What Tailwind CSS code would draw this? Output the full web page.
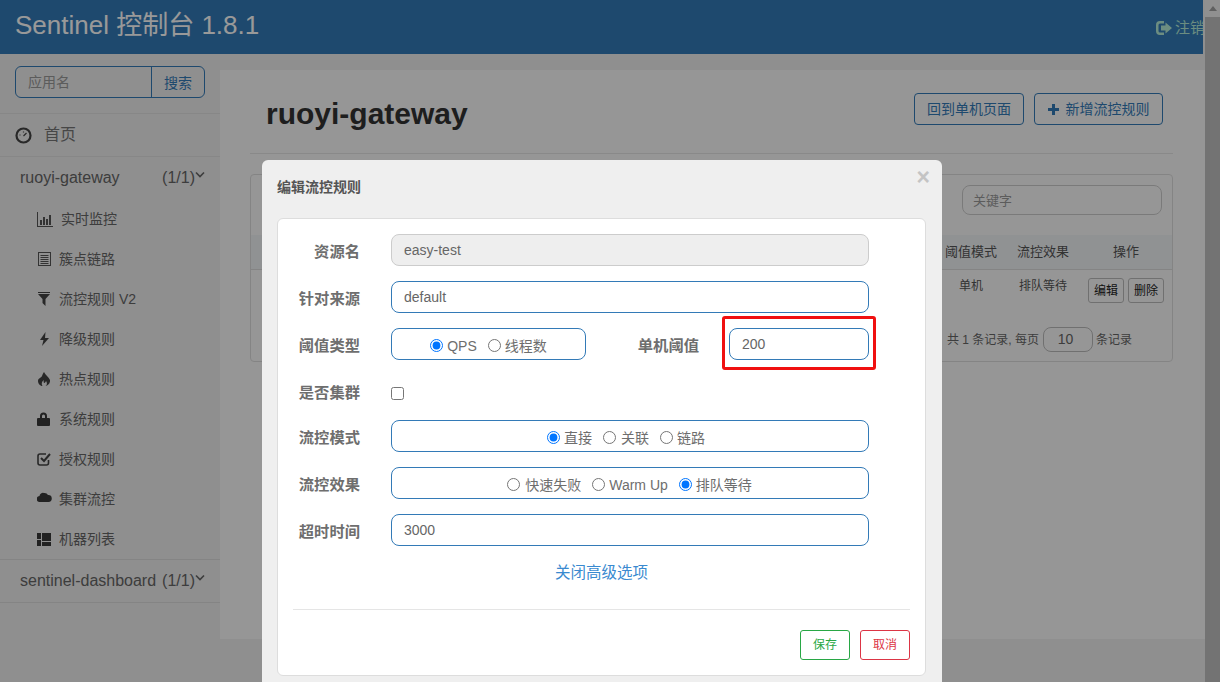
<!DOCTYPE html>
<html lang="zh"><head><meta charset="utf-8"><title>Sentinel</title>
<script src="https://cdn.jsdelivr.net/npm/@tailwindcss/browser@4"></script></head>
<body class="overflow-hidden">
<div class="relative flex w-[1220px] h-[682px] overflow-hidden font-['Liberation_Sans','Noto_Sans_CJK_SC',sans-serif] text-[14px] text-[#555]">
  <div class="w-[1205px] h-full flex flex-col bg-[#eee]">
    <header class="w-[1203px] h-[54px] shrink-0 bg-[#337ab7] flex items-center justify-between overflow-hidden pl-[15px]">
      <span class="text-[26px] leading-[50px] -mt-[4px] text-white whitespace-nowrap">Sentinel 控制台 1.8.1</span>
      <span class="flex items-center gap-[3px] text-[15px] text-[#b5ecd8] whitespace-nowrap w-[47px] overflow-hidden pt-[2px]">
        <svg class="w-[16px] h-[16px] shrink-0" viewBox="0 0 16 16" fill="currentColor"><path d="M0 5a4 4 0 0 1 4-4h4v2.500H4A1.500 1.500 0 0 0 2.500 5v6A1.500 1.500 0 0 0 4 12.500h4V15H4a4 4 0 0 1-4-4z"/><path d="M9.500 2.500L16 8l-6.500 5.500V10.500H5v-5h4.500z"/></svg>
        <span class="shrink-0">注销</span>
      </span>
    </header>
    <div class="flex flex-1 min-h-0">
      <aside class="w-[220px] shrink-0">
        <div class="pt-[12px] px-[15px] pb-[15px]">
          <div class="flex h-[32px] border border-[#337ab7] rounded-[6px] bg-[#eee] overflow-hidden">
            <input class="w-[135px] px-[12px] bg-transparent outline-none text-[14px] placeholder:text-[#999]" placeholder="应用名">
            <div class="flex-1 border-l border-[#337ab7] flex items-center justify-center text-[14px] pt-[2px] text-[#337ab7]">搜索</div>
          </div>
        </div>
        <div class="h-[44px] border-y border-[#e2e2e2] flex items-center pl-[15px] text-[16px] text-[#777]">
          <svg class="w-[17px] h-[17px] text-[#444]" viewBox="0 0 17 17" fill="none" stroke="currentColor" stroke-width="2.200"><circle cx="8.500" cy="8.500" r="7"/><path d="M8.500 9L11.500 6M4.500 8h1M8.500 4.500v1" stroke-width="1.200"/></svg>
          <span class="ml-[12px]">首页</span>
        </div>
        <div class="h-[42px] flex items-center pl-[20px] pr-[15px] text-[16px] text-[#666] justify-between">
          <span>ruoyi-gateway</span>
          <span class="flex items-center">(1/1)<svg class="w-[10px] h-[8px] -mt-[6px]" viewBox="0 0 10 8" fill="none" stroke="currentColor" stroke-width="1.600"><path d="M1 1.500l4 4 4-4"/></svg></span>
        </div>
        <ul class="text-[14px] text-[#666]">
          <li class="h-[40px] flex items-center pl-[37px]"><svg class="w-[16px] h-[15px] text-[#555] mr-[8px]" viewBox="0 0 16 15" fill="currentColor"><path d="M0 0h1v14h15v1H0z"/><path d="M3 8h2v5H3zM6 5h2v8H6zM9 7h2v6H9zM12 3h2v10h-2z"/></svg><span>实时监控</span></li>
          <li class="h-[40px] flex items-center pl-[38px]"><svg class="w-[13px] h-[14px] text-[#555] mr-[8px]" viewBox="0 0 13 14" fill="none" stroke="currentColor"><rect x=".5" y=".5" width="12" height="13"/><path d="M2.500 3.500h8M2.500 5.500h8M2.500 7.500h8M2.500 9.500h8M2.500 11.500h8"/></svg><span>簇点链路</span></li>
          <li class="h-[40px] flex items-center pl-[38px]"><svg class="w-[12px] h-[14px] text-[#444] mr-[9px]" viewBox="0 0 12 14" fill="currentColor"><path d="M0 0h12v1H0zM0 2h12L7.500 7v7L4.500 11V7z"/></svg><span>流控规则 V2</span></li>
          <li class="h-[40px] flex items-center pl-[40px]"><svg class="w-[9px] h-[14px] text-[#444] mr-[10px]" viewBox="0 0 9 14" fill="currentColor"><path d="M5.500 0L0 8h3.500L2 14l7-8H5z"/></svg><span>降级规则</span></li>
          <li class="h-[40px] flex items-center pl-[38px]"><svg class="w-[12px] h-[14px] text-[#444] mr-[9px]" viewBox="0 0 12 14" fill="currentColor"><path d="M6 0c1 3 5 5 6 8 .5 3-2 6-4.500 6 1.500-1 2-3 .5-5-.5 1.500-1.500 2-2 2-.5-1-.5-2 0-3-2 1-3 4-1.500 6C2 14 0 11.500 0 9c0-3 3-3 4-5 .5-1 1-3 2-4z"/></svg><span>热点规则</span></li>
          <li class="h-[40px] flex items-center pl-[37px]"><svg class="w-[13px] h-[14px] text-[#3a3a3a] mr-[9px]" viewBox="0 0 13 14" fill="currentColor"><path d="M3 6V4a3.500 3.500 0 0 1 7 0v2h2a1 1 0 0 1 1 1v6a1 1 0 0 1-1 1H1a1 1 0 0 1-1-1V7a1 1 0 0 1 1-1zm2 0h3V4a1.500 1.500 0 0 0-3 0z"/></svg><span>系统规则</span></li>
          <li class="h-[40px] flex items-center pl-[37px]"><svg class="w-[14px] h-[14px] text-[#444] mr-[8px]" viewBox="0 0 14 14" fill="none" stroke="currentColor" stroke-width="1.600"><path d="M11.500 8v3a2 2 0 0 1-2 2H3a2 2 0 0 1-2-2V4a2 2 0 0 1 2-2h6"/><path d="M4 6l3 3 6-7" stroke-width="2"/></svg><span>授权规则</span></li>
          <li class="h-[40px] flex items-center pl-[37px]"><svg class="w-[15px] h-[10px] text-[#3a3a3a] mr-[7px] -mt-[4px]" viewBox="0 0 15 10" fill="currentColor"><path d="M3 10a3 3 0 0 1-.5-6A3.500 3.500 0 0 1 7 1a4 4 0 0 1 4 2 3.500 3.500 0 0 1 .5 7z"/></svg><span>集群流控</span></li>
          <li class="h-[40px] flex items-center pl-[37px]"><svg class="w-[14px] h-[13px] text-[#3a3a3a] mr-[8px]" viewBox="0 0 14 13" fill="currentColor"><path d="M0 0h4v6H0zM0 7h4v6H0zM5 0h9v8H5zM5 9h9v4H5z" /></svg><span>机器列表</span></li>
        </ul>
        <div class="h-[44px] border-y border-[#dcdcdc] flex items-center justify-between pl-[20px] pr-[15px] text-[16px] text-[#666]">
          <span class="whitespace-nowrap">sentinel-dashboard</span>
          <span class="flex items-center">(1/1)<svg class="w-[10px] h-[8px] -mt-[6px]" viewBox="0 0 10 8" fill="none" stroke="currentColor" stroke-width="1.600"><path d="M1 1.500l4 4 4-4"/></svg></span>
        </div>
      </aside>
      <main class="flex-1 mt-[16px] h-[569px] bg-[#fbfbfb] pl-[30px] pr-[32px]">
        <div class="h-[84px] pt-[23px] flex justify-between border-b border-[#e5e5e5]">
          <h1 class="pl-[16px] text-[30px] leading-[42px] font-bold text-[#333]">ruoyi-gateway</h1>
          <div class="flex gap-[10px] pr-[10px] h-[32px] text-[14px] text-[#337ab7]">
            <div class="w-[110px] border border-[#337ab7] rounded-[4px] flex items-center justify-center">回到单机页面</div>
            <div class="w-[129px] border border-[#337ab7] rounded-[4px] flex items-center justify-center gap-[7px]"><svg class="w-[11px] h-[11px]" viewBox="0 0 11 11" fill="currentColor"><path d="M4 0h3v4h4v3H7v4H4V7H0V4h4z"/></svg>新增流控规则</div>
          </div>
        </div>
        <section class="mt-[20px] h-[188px] border border-[#ddd] rounded-[4px] overflow-hidden">
          <div class="h-[60px] flex justify-end pt-[10px] pr-[10px]">
            <input class="w-[200px] h-[30px] px-[10px] border border-[#ccc] rounded-[8px] bg-transparent text-[13px] outline-none placeholder:text-[#999]" placeholder="关键字">
          </div>
          <div class="h-[35px] bg-[#f1f3f5] border-b border-[#ddd] flex justify-end items-center text-[13px] text-[#555] text-center">
            <span class="w-[72px]">阈值模式</span><span class="w-[72px]">流控效果</span><span class="w-[93px] pl-[1px]">操作</span>
          </div>
          <div class="h-[40px] flex justify-end text-[12px] text-[#555] text-center">
            <span class="w-[72px] pt-[7px]">单机</span><span class="w-[72px] pt-[7px]">排队等待</span>
            <span class="w-[93px] pt-[8px] pl-[9px] flex gap-[4px]">
              <span class="w-[36px] h-[25px] border border-[#bbb] rounded-[3px] flex items-center justify-center text-[#222]">编辑</span>
              <span class="w-[36px] h-[25px] border border-[#bbb] rounded-[3px] flex items-center justify-center text-[#222]">删除</span>
            </span>
          </div>
          <div class="flex justify-end items-center pt-[17px] pr-[40px] text-[12px] text-[#666] whitespace-nowrap">
            <span>共 1 条记录, 每页</span>
            <span class="ml-[4px] mr-[3px] w-[50px] h-[25px] border border-[#bbb] rounded-[8px] flex items-center justify-center text-[14px] pr-[5px]">10</span>
            <span>条记录</span>
          </div>
        </section>
      </main>
    </div>
  </div>
  <div class="w-[15px] h-full flex flex-col bg-[#c0c0c0]">
    <div class="h-[17px] flex items-center justify-center bg-[#f0f0f0]"><svg class="w-[8px] h-[5px]" viewBox="0 0 8 5" fill="#a0a0a0"><path d="M4 0l4 5H0z"/></svg></div>
    <div class="flex-1"></div>
  </div>

  <div class="absolute inset-0 bg-black/40"></div>

  <div class="absolute left-[262px] top-[160px] w-[680px] h-[540px] bg-[#efefef] rounded-[6px] px-[15px]">
    <div class="h-[58px] flex items-start justify-between pt-[18px]">
      <h2 class="text-[14px] leading-[18px] font-bold text-[#555]">编辑流控规则</h2>
      <span class="text-[23px] leading-[16px] font-bold text-[#c4c4c4] -mr-[3px] -mt-[9px]">×</span>
    </div>
    <div class="w-[649px] h-[458px] bg-white border border-[#ddd] rounded-[6px] px-[15px] pt-[15px]">
      <div class="flex h-[32px] mb-[15px]">
        <label class="w-[67px] shrink-0 flex justify-end font-bold text-[15.3px] text-[#6e6e6e] whitespace-nowrap pt-[7px]">资源名</label>
        <input class="ml-[31px] w-[478px] h-[32px] px-[12px] border border-[#ccc] rounded-[8px] bg-[#eee] text-[14px] text-[#666] outline-none" value="easy-test" disabled>
      </div>
      <div class="flex h-[32px] mb-[15px]">
        <label class="w-[67px] shrink-0 flex justify-end font-bold text-[15.3px] text-[#6e6e6e] whitespace-nowrap pt-[7px]">针对来源</label>
        <input class="ml-[31px] w-[478px] h-[32px] px-[12px] border border-[#337ab7] rounded-[8px] text-[14px] text-[#666] outline-none" value="default">
      </div>
      <div class="flex h-[32px] mb-[15px]">
        <label class="w-[67px] shrink-0 flex justify-end font-bold text-[15.3px] text-[#6e6e6e] whitespace-nowrap pt-[7px]">阈值类型</label>
        <div class="ml-[31px] w-[195px] h-[32px] border border-[#337ab7] rounded-[8px] flex items-center justify-center text-[14px] text-[#6e6e6e]">
          <input class="mt-[2px]" type="radio" name="a" checked><span class="ml-[4px] pt-[5px]">QPS</span><input class="ml-[11px] mt-[2px]" type="radio" name="a"><span class="ml-[4px] pt-[5px]">线程数</span>
        </div>
        <label class="w-[113px] shrink-0 flex justify-end font-bold text-[15.3px] text-[#6e6e6e] whitespace-nowrap pt-[7px]">单机阈值</label>
        <div class="ml-[23px] -mt-[12px] w-[154px] h-[54px] border-[3px] border-[#f01010] rounded-[3px] pl-[4px] pt-[9px] shrink-0">
          <input class="w-[140px] h-[32px] px-[12px] border border-[#337ab7] rounded-[8px] text-[14px] text-[#666] outline-none block" value="200">
        </div>
      </div>
      <div class="flex h-[30px] mb-[15px]">
        <label class="w-[67px] shrink-0 flex justify-end font-bold text-[15.3px] text-[#6e6e6e] whitespace-nowrap pt-[7px]">是否集群</label>
        <input class="ml-[31px] mt-[12px] w-[13px] h-[13px]" type="checkbox">
      </div>
      <div class="flex h-[32px] mb-[15px]">
        <label class="w-[67px] shrink-0 flex justify-end font-bold text-[15.3px] text-[#6e6e6e] whitespace-nowrap pt-[7px]">流控模式</label>
        <div class="ml-[31px] w-[478px] h-[32px] border border-[#337ab7] rounded-[8px] flex items-center justify-center text-[14px] text-[#6e6e6e] pr-[8px]">
          <input class="mt-[2px]" type="radio" name="b" checked><span class="ml-[4px] pt-[5px]">直接</span><input class="ml-[11px] mt-[2px]" type="radio" name="b"><span class="ml-[5px] pt-[5px]">关联</span><input class="ml-[11px] mt-[2px]" type="radio" name="b"><span class="ml-[4px] pt-[5px]">链路</span>
        </div>
      </div>
      <div class="flex h-[32px] mb-[15px]">
        <label class="w-[67px] shrink-0 flex justify-end font-bold text-[15.3px] text-[#6e6e6e] whitespace-nowrap pt-[7px]">流控效果</label>
        <div class="ml-[31px] w-[478px] h-[32px] border border-[#337ab7] rounded-[8px] flex items-center justify-center text-[14px] text-[#6e6e6e] pr-[1px]">
          <input class="mt-[2px]" type="radio" name="c"><span class="ml-[5px] pt-[5px]">快速失败</span><input class="ml-[11px] mt-[2px]" type="radio" name="c"><span class="ml-[4px] pt-[5px]">Warm Up</span><input class="ml-[11px] mt-[2px]" type="radio" name="c" checked><span class="ml-[4px] pt-[5px]">排队等待</span>
        </div>
      </div>
      <div class="flex h-[32px] mb-[15px]">
        <label class="w-[67px] shrink-0 flex justify-end font-bold text-[15.3px] text-[#6e6e6e] whitespace-nowrap pt-[7px]">超时时间</label>
        <input class="ml-[31px] w-[478px] h-[32px] px-[12px] border border-[#337ab7] rounded-[8px] text-[14px] text-[#666] outline-none" value="3000">
      </div>
      <div class="h-[22px] leading-[24px] text-center text-[15.5px] text-[#3a8ad0]">关闭高级选项</div>
      <div class="mt-[26px] border-t border-[#e5e5e5] pt-[20px] flex justify-end gap-[10px] text-[12px]">
        <span class="w-[50px] h-[30px] border border-[#28a745] rounded-[3px] flex items-center justify-center text-[#28a745]">保存</span>
        <span class="w-[50px] h-[30px] border border-[#dc3545] rounded-[3px] flex items-center justify-center text-[#dc3545]">取消</span>
      </div>
    </div>
  </div>
</div>
</body></html>
